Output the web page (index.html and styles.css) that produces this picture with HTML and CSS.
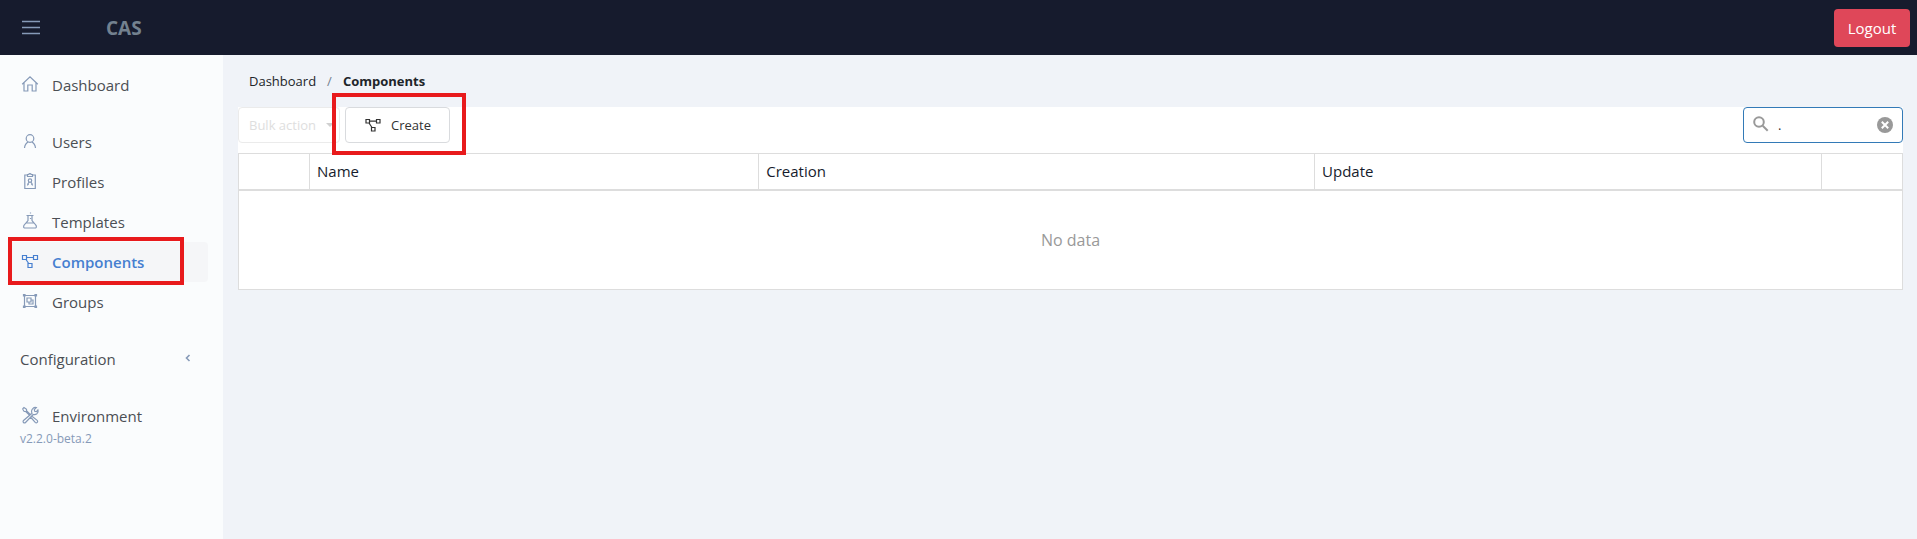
FILE: index.html
```html
<!DOCTYPE html>
<html lang="en">
<head>
<meta charset="utf-8">
<meta name="viewport" content="width=device-width, initial-scale=1">
<title>CAS - Components</title>
<link rel="stylesheet" href="styles.css">
</head>
<body>
<header class="topbar">
  <button class="menu-toggle" type="button" aria-label="Toggle menu">
    <svg class="menu-icon" viewBox="0 0 20 18"><path d="M1 2.500h18M1 8.500h18M1 14.500h18"/></svg>
  </button>
  <a class="brand" href="#">CAS</a>
  <button class="logout" type="button">Logout</button>
</header>
<div class="shell">
  <nav class="sidebar" aria-label="Main">
    <ul class="nav-group">
      <li><a class="nav-link" href="#">
        <svg class="icon" viewBox="0 0 18 18"><path d="M1.200 9.300 9 1.800l7.800 7.500M3 8v8h3.800v-6h4.400v6H15V8"/></svg>
        <span>Dashboard</span></a></li>
    </ul>
    <ul class="nav-group">
      <li><a class="nav-link" href="#">
        <svg class="icon" viewBox="0 0 18 18"><circle cx="9" cy="6.500" r="3.800"/><path d="M3.500 16c.3-3.200 1.700-5 3.700-6M14.500 16c-.3-3.200-1.700-5-3.700-6"/></svg>
        <span>Users</span></a></li>
      <li><a class="nav-link" href="#">
        <svg class="icon" viewBox="0 0 18 18"><path d="M6.500 3H3.800v13.500h10.500V3H11.500M6.500 4.500v-2h1.200a1.300 1.300 0 0 1 2.500 0h1.300v2z"/><circle cx="9" cy="8.600" r="1.700"/><path d="M6.500 13.500c.1-1.600.8-2.500 1.600-3.200M11.500 13.500c-.1-1.600-.8-2.500-1.600-3.200M6.800 12.500h1M10.200 12.500h1"/></svg>
        <span>Profiles</span></a></li>
      <li><a class="nav-link" href="#">
        <svg class="icon" viewBox="0 0 18 18"><path d="M5.500 3.500h7M7 3.500v5c-.8 1.500-4 4-4.300 5.500-.3 1.400.3 2 1.500 2h9.600c1.200 0 1.800-.6 1.500-2-.3-1.500-3.500-4-4.300-5.500v-5M5.300 11h7.400M9.500.5v1M9.500 6v1"/></svg>
        <span>Templates</span></a></li>
      <li class="nav-current">
        <a class="nav-link nav-link-active" href="#" aria-current="page">
        <svg class="icon" viewBox="0 0 18 18"><path d="M1.500 3.500h4v4h-4zM12.500 3.500h4v4h-4zM7 11.500h4v4H7zM5.500 5.500h7M5 7.500l2.700 4"/></svg>
        <span>Components</span></a>
        <span class="highlight highlight-nav"></span>
      </li>
      <li><a class="nav-link" href="#">
        <svg class="icon" viewBox="0 0 18 18"><path d="M3.500 3.500h11v11h-11zM2.500 2.500h1.500V4H2.500zM14 2.500h1.500V4H14zM2.500 14h1.500v1.500H2.500zM14 14h1.500v1.500H14zM6 6h4v4H6zM8 10v2h4V8h-2"/></svg>
        <span>Groups</span></a></li>
    </ul>
    <ul class="nav-group">
      <li><a class="nav-link nav-parent" href="#">
        <span>Configuration</span>
        <svg class="chevron" viewBox="0 0 8 10"><path d="M5.500 2 2.500 5l3 3"/></svg></a></li>
    </ul>
    <ul class="nav-group">
      <li><a class="nav-link" href="#">
        <svg class="icon" viewBox="0 0 18 18"><path d="M1.500 3 3 1.500l2.500 1.700v1.500l3.700 3.800M1.500 3l1.700 2.500h1.500l3.700 3.700M10.300 9.800l5.900 4.600a1.400 1.400 0 0 1-2 2L9.500 11M11 7.300c-.8-1.800-.4-3.500.8-4.700 1-1 2.300-1.300 3.500-1l-2 2 .4 1.700 1.700.4 1.500-1.700c.4 1.300 0 2.700-1 3.700-1 .9-2.300 1.200-3.700.8l-7.700 8a1.400 1.400 0 0 1-2-2z"/></svg>
        <span>Environment</span></a></li>
    </ul>
    <p class="version">v2.2.0-beta.2</p>
  </nav>
  <main class="content">
    <nav class="breadcrumb" aria-label="Breadcrumb">
      <a class="crumb" href="#">Dashboard</a>
      <span class="crumb-divider">/</span>
      <span class="crumb-current">Components</span>
    </nav>
    <div class="toolbar">
      <button class="btn bulk" type="button" disabled>Bulk action
        <svg class="caret" viewBox="0 0 8 4"><path d="M0 0h8L4 4z"/></svg>
      </button>
      <div class="create-wrap">
        <button class="btn create" type="button">
          <svg class="create-icon" viewBox="0 0 18 18"><path d="M2 3.500h3.500V7H2zM12.500 3.500H16V7h-3.500zM7.500 11.500H11V15H7.500zM5.500 5.200h7M5 7l3 4.500"/></svg>
          Create
        </button>
        <span class="highlight highlight-create"></span>
      </div>
      <div class="search">
        <svg class="search-icon" viewBox="0 0 16 16"><circle cx="6" cy="6" r="4.800"/><path d="m9.700 9.700 5 5"/></svg>
        <input class="search-input" type="text" value="." aria-label="Search">
        <button class="clear" type="button" aria-label="Clear search">
          <svg class="clear-icon" viewBox="0 0 16 16"><circle cx="8" cy="8" r="8"/><path d="m4.800 4.800 6.400 6.400M11.200 4.800l-6.400 6.400"/></svg>
        </button>
      </div>
    </div>
    <table class="grid">
      <thead>
        <tr>
          <th class="col-select"></th>
          <th class="col-name">Name</th>
          <th class="col-creation">Creation</th>
          <th class="col-update">Update</th>
          <th class="col-actions"></th>
        </tr>
      </thead>
      <tbody>
        <tr><td class="empty" colspan="5">No data</td></tr>
      </tbody>
    </table>
  </main>
</div>
</body>
</html>
```

FILE: styles.css
```css
* {
  box-sizing: border-box;
}

body {
  margin: 0;
  min-height: 100vh;
  display: flex;
  flex-direction: column;
  background: #f0f3f8;
  color: #212529;
  font-family: "Segoe UI", "Open Sans", "Noto Sans", sans-serif;
  font-size: 15px;
  line-height: 24px;
}

button,
input {
  font: inherit;
}

a {
  color: inherit;
  text-decoration: none;
}

.topbar {
  display: flex;
  align-items: center;
  height: 55px;
  padding: 0 7px 0 21px;
  background: #161b2d;
}

.menu-toggle {
  display: flex;
  padding: 0;
  border: 0;
  background: none;
}

.menu-icon {
  width: 20px;
  height: 18px;
  fill: none;
  stroke: #869ab8;
  stroke-width: 1.4;
}

.brand {
  margin-left: 65px;
  color: #73818f;
  font-size: 19px;
  font-weight: 700;
}

.logout {
  width: 76px;
  height: 38px;
  margin-left: auto;
  padding: 0;
  border: 0;
  border-radius: 4px;
  background: #df4759;
  color: #fff;
}

.shell {
  display: flex;
  flex: 1;
}

.sidebar {
  flex: none;
  width: 223px;
  padding: 10px 15px 10px 8px;
  background: #fafcfd;
}

.nav-group {
  margin: 0 0 17px;
  padding: 0;
  list-style: none;
}

.nav-link {
  display: flex;
  align-items: center;
  height: 40px;
  padding: 0 12px;
  border-radius: 4px;
  color: #4b4f54;
}

.icon {
  width: 20px;
  height: 20px;
  margin: 0 12px 3px 0;
  padding: 1px;
  fill: none;
  stroke: #869ab8;
  stroke-width: 1.2;
}

.nav-current {
  position: relative;
}

.nav-link-active {
  background: #f5f6f8;
  color: #467fd0;
  font-weight: 600;
}

.nav-link-active .icon {
  stroke: #467fd0;
}

.nav-parent {
  justify-content: space-between;
}

.chevron {
  width: 8px;
  height: 10px;
  margin: 0 4px 2px 0;
  fill: none;
  stroke: #869ab8;
  stroke-width: 1.6;
}

.version {
  margin: -23px 0 0;
  padding: 0 12px;
  color: #869ab8;
  font-size: 12px;
  line-height: 18px;
}

.highlight {
  position: absolute;
  border: 4px solid #e81a1c;
  pointer-events: none;
}

.highlight-nav {
  top: -5px;
  right: 24px;
  bottom: -3px;
  left: 0;
}

.highlight-create {
  top: -14px;
  right: -16px;
  bottom: -12px;
  left: -13px;
}

.content {
  flex: 1;
  min-width: 0;
  padding: 14px 14px 24px 15px;
}

.breadcrumb {
  display: flex;
  gap: 11px;
  margin-bottom: 14px;
  padding-left: 11px;
  font-size: 13px;
}

.crumb-divider {
  color: #73818f;
}

.crumb-current {
  font-weight: 700;
}

.toolbar {
  display: flex;
  align-items: flex-start;
  padding-bottom: 10px;
  background: #fff;
}

.btn {
  display: flex;
  align-items: center;
  height: 36px;
  border: 1px solid #d9dbde;
  border-radius: 4px;
  background: #fff;
  color: #333;
  font-size: 13px;
}

.bulk {
  gap: 10px;
  width: 102px;
  margin-right: 5px;
  padding: 0 0 0 10px;
  border-color: #ebebeb;
  color: #dedede;
  white-space: nowrap;
}

.caret {
  flex: none;
  width: 8px;
  height: 4px;
  fill: #d0d0d0;
}

.create-wrap {
  position: relative;
}

.create {
  gap: 9px;
  width: 105px;
  padding: 0 0 0 18px;
}

.create-icon {
  width: 18px;
  height: 18px;
  fill: none;
  stroke: #333;
  stroke-width: 1.2;
}

.search {
  display: flex;
  align-items: center;
  width: 160px;
  height: 36px;
  margin-left: auto;
  padding: 0 9px;
  border: 1px solid #337ab7;
  border-radius: 4px;
  background: #fff;
}

.search-icon {
  flex: none;
  width: 16px;
  height: 16px;
  margin-bottom: 2px;
  fill: none;
  stroke: #999;
  stroke-width: 2;
}

.search-input {
  flex: 1;
  min-width: 0;
  padding: 0 9px;
  border: 0;
  outline: 0;
  background: none;
  color: #333;
  font-size: 13px;
}

.clear {
  display: flex;
  padding: 0;
  border: 0;
  background: none;
}

.clear-icon {
  width: 16px;
  height: 16px;
  fill: #999;
  stroke: #fff;
  stroke-width: 2;
}

.clear-icon circle {
  stroke: none;
}

.grid {
  width: 100%;
  border: 1px solid #ddd;
  border-collapse: collapse;
  table-layout: fixed;
  background: #fff;
}

.grid th {
  height: 36px;
  padding: 0 7px;
  border: 1px solid #ddd;
  border-bottom-width: 2px;
  color: #161c2d;
  font-weight: 400;
  text-align: left;
}

.col-select {
  width: 71px;
}

.col-name {
  width: 27%;
}

.col-creation {
  width: 33.4%;
}

.col-actions {
  width: 81px;
}

.grid .empty {
  height: 100px;
  padding: 0;
  color: #999;
  font-size: 16px;
  text-align: center;
}
```
